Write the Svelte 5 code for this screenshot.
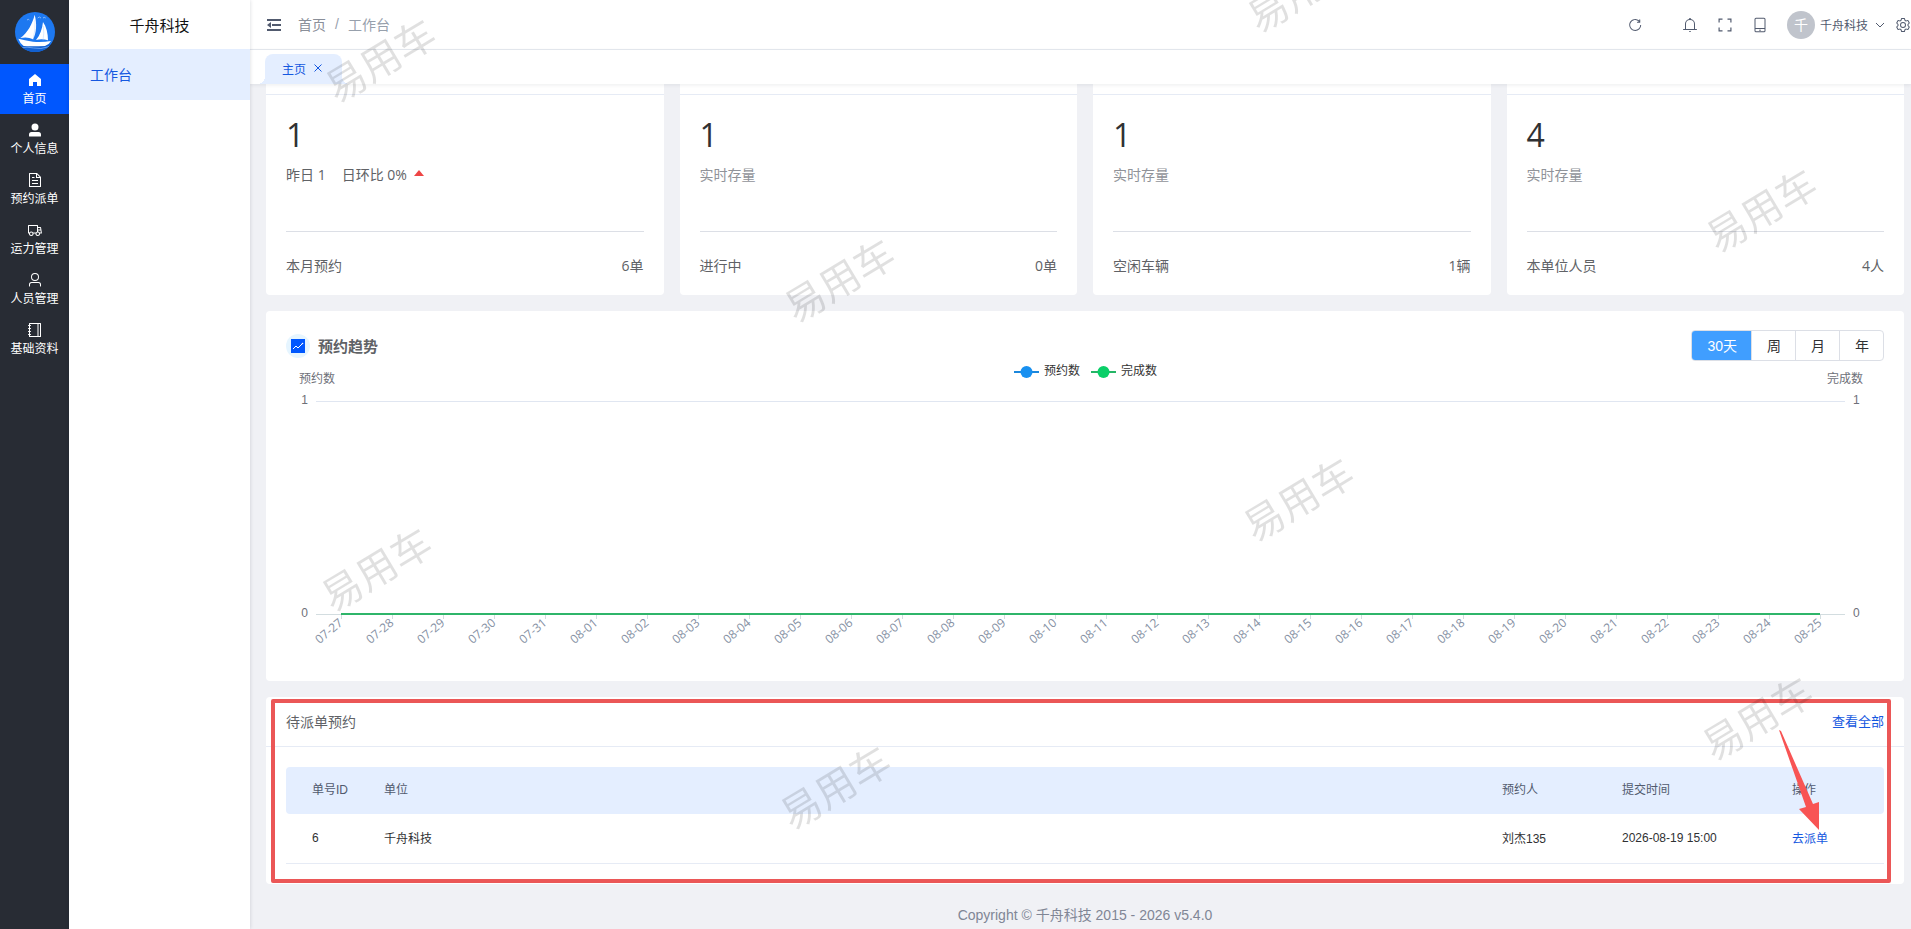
<script>
    const fills = {
        home: 'M512 128 128 447.936V896h255.936V640H640v256h255.936V447.936z',
        userFilled: 'M288 320a224 224 0 1 0 448 0 224 224 0 1 0-448 0zm544 608H160a32 32 0 0 1-32-32v-96a160 160 0 0 1 160-160h448a160 160 0 0 1 160 160v96a32 32 0 0 1-32 32z',
        document: 'M832 384H576V128H192v768h640V384zm-26.496-64L640 154.496V320h165.504zM160 64h480l256 256v608a32 32 0 0 1-32 32H160a32 32 0 0 1-32-32V96a32 32 0 0 1 32-32zm160 448h384v64H320v-64zm0-192h160v64H320v-64zm0 384h384v64H320v-64z',
        van: 'M128.896 736H96a32 32 0 0 1-32-32V224a32 32 0 0 1 32-32h576a32 32 0 0 1 32 32v96h164.544a32 32 0 0 1 31.616 27.136l54.144 352A32 32 0 0 1 922.688 736h-91.52a144 144 0 1 1-286.272 0H415.104a144 144 0 1 1-286.272 0zm23.36-64a143.872 143.872 0 0 1 239.488 0H568.32c17.088-25.6 42.24-45.376 71.744-55.808V256H128v416h24.256zm655.488 0h77.632l-19.648-128H704v64.896A144 144 0 0 1 807.744 672zm48.128-192-14.72-96H704v96h151.872zM688 832a80 80 0 1 0 0-160 80 80 0 0 0 0 160zm-416 0a80 80 0 1 0 0-160 80 80 0 0 0 0 160z',
        user: 'M512 512a192 192 0 1 0 0-384 192 192 0 0 0 0 384zm0 64a256 256 0 1 1 0-512 256 256 0 0 1 0 512zm320 320v-96a96 96 0 0 0-96-96H288a96 96 0 0 0-96 96v96a32 32 0 1 1-64 0v-96a160 160 0 0 1 160-160h448a160 160 0 0 1 160 160v96a32 32 0 1 1-64 0z',
        notebook: 'M192 128v768h640V128H192zm-32-64h704a32 32 0 0 1 32 32v832a32 32 0 0 1-32 32H160a32 32 0 0 1-32-32V96a32 32 0 0 1 32-32zM672 128h64v768h-64zM96 192h128q32 0 32 32t-32 32H96q-32 0-32-32t32-32zm0 192h128q32 0 32 32t-32 32H96q-32 0-32-32t32-32zm0 192h128q32 0 32 32t-32 32H96q-32 0-32-32t32-32zm0 192h128q32 0 32 32t-32 32H96q-32 0-32-32t32-32z',
        refresh: 'M784.512 230.272v-50.56a32 32 0 1 1 64 0v149.056a32 32 0 0 1-32 32H667.52a32 32 0 1 1 0-64h92.992A320 320 0 1 0 524.8 833.152a320 320 0 0 0 320-320h64a384 384 0 0 1-384 384 384 384 0 0 1-384-384 384 384 0 0 1 643.712-282.88z',
        bell: 'M512 64a64 64 0 0 1 64 64v64H448v-64a64 64 0 0 1 64-64zM256 768h512V448a256 256 0 1 0-512 0v320zm256-640a320 320 0 0 1 320 320v384H192V448a320 320 0 0 1 320-320zM96 768h832q32 0 32 32t-32 32H96q-32 0-32-32t32-32zm352 128h128a64 64 0 0 1-128 0z',
        full: 'M96 96h256v76H172v180H96V96zM672 96h256v256h-76V172H672zM96 672h76v180h180v76H96zM852 672h76v256H672v-76h180z',
        tablet: 'M224 768v112a32 32 0 0 0 32 32h512a32 32 0 0 0 32-32V768H224zm0-64h576V144a32 32 0 0 0-32-32H256a32 32 0 0 0-32 32v560zm32-656h512a96 96 0 0 1 96 96v736a96 96 0 0 1-96 96H256a96 96 0 0 1-96-96V144a96 96 0 0 1 96-96zm256 840a48 48 0 1 1 0-96 48 48 0 0 1 0 96z',
        setting: 'M600.704 64a32 32 0 0 1 30.464 22.208l35.2 109.376c14.784 7.232 28.928 15.36 42.432 24.512l112.384-24.192a32 32 0 0 1 34.432 15.36L944.32 364.8a32 32 0 0 1-4.032 37.504l-77.12 85.12a357.12 357.12 0 0 1 0 49.024l77.12 85.248a32 32 0 0 1 4.032 37.504l-88.704 153.6a32 32 0 0 1-34.432 15.296L708.8 803.904c-13.44 9.088-27.648 17.28-42.368 24.512l-35.264 109.376A32 32 0 0 1 600.704 960H423.296a32 32 0 0 1-30.464-22.208L357.696 828.48a351.616 351.616 0 0 1-42.56-24.64l-112.32 24.256a32 32 0 0 1-34.432-15.36L79.68 659.2a32 32 0 0 1 4.032-37.504l77.12-85.248a357.12 357.12 0 0 1 0-48.896l-77.12-85.248A32 32 0 0 1 79.68 364.8l88.704-153.6a32 32 0 0 1 34.432-15.296l112.32 24.256c13.568-9.152 27.776-17.408 42.56-24.64l35.2-109.312A32 32 0 0 1 423.232 64H600.64zm-23.424 64H446.72l-36.352 113.088-24.512 11.968a294.113 294.113 0 0 0-34.816 20.096l-22.656 15.36-116.224-25.088-65.28 113.152 79.68 88.192-1.92 27.136a293.12 293.12 0 0 0 0 40.192l1.92 27.136-79.808 88.192 65.344 113.152 116.224-25.024 22.656 15.296a294.113 294.113 0 0 0 34.816 20.096l24.512 11.968L446.72 896h130.688l36.48-113.152 24.448-11.904a288.282 288.282 0 0 0 34.752-20.096l22.592-15.296 116.288 25.024 65.28-113.152-79.744-88.192 1.92-27.136a293.12 293.12 0 0 0 0-40.256l-1.92-27.136 79.808-88.128-65.344-113.152-116.288 24.96-22.592-15.232a287.616 287.616 0 0 0-34.752-20.096l-24.448-11.904L577.344 128zM512 320a192 192 0 1 1 0 384 192 192 0 0 1 0-384zm0 64a128 128 0 1 0 0 256 128 128 0 0 0 0-256z'
    };

    const menu = [
        { icon: 'home', label: '首页' },
        { icon: 'userFilled', label: '个人信息' },
        { icon: 'document', label: '预约派单' },
        { icon: 'van', label: '运力管理' },
        { icon: 'user', label: '人员管理' },
        { icon: 'notebook', label: '基础资料' }
    ];

    const cards = [
        { value: 1, compare: true, label: '本月预约', total: '6单' },
        { value: 1, label: '进行中', total: '0单' },
        { value: 1, label: '空闲车辆', total: '1辆' },
        { value: 4, label: '本单位人员', total: '4人' }
    ];

    const ranges = ['30天', '周', '月', '年'];
    let range = $state('30天');

    // 30 days from 07-27
    const days = Array.from({ length: 30 }, (_, i) => {
        const d = new Date(2026, 6, 27 + i);
        return String(d.getMonth() + 1).padStart(2, '0') + '-' + String(d.getDate()).padStart(2, '0');
    });

    const left = 30;
    const top = 40;
    const bottom = 253;
    let width = $state(1598);
    let right = $derived(width - 39);
    let step = $derived((right - left) / days.length);
    let middle = $derived(Math.round(width / 2));

    const tickX = (i) => Math.round(left + step * (i + 0.5));

    const rows = [
        { id: 6, unit: '千舟科技', person: '刘杰135', time: '2026-08-19 15:00' }
    ];

    const marks = [
        [381, 61], [1303, -9], [1762, 211], [840, 281],
        [1299, 500], [377, 570], [1758, 719], [836, 788]
    ];
</script>

{#snippet icon(name)}
    <svg class="icon" viewBox="0 0 1024 1024" aria-hidden="true"><path d={fills[name]} /></svg>
{/snippet}

<div class="layout">
    <nav class="side">
        <svg class="logo" viewBox="0 0 120 120" aria-hidden="true">
            <defs>
                <clipPath id="round"><circle cx="60" cy="60" r="60" /></clipPath>
            </defs>
            <g clip-path="url(#round)">
                <rect width="120" height="120" fill="#1d78f0" />
                <path d="M0 97q30 8 60 3t60-5v25H0z" fill="#1260d0" />
                <path d="M59 8C52 36 38 62 16 78q22-5 38 4C65 62 66 34 59 8z" fill="#fff" />
                <path d="M84 30C82 50 75 70 63 84q18-5 36 1C99 64 94 44 84 30z" fill="#fff" />
                <path d="M10 80q18 4 44 9 28 2 54-2-6 11-18 15-40 2-64 0Q15 94 10 80z" fill="#fff" />
                <path d="M60 24q2 30-6 60M85 42q3 22-1 44" stroke="#8fc0ff" stroke-width="1" fill="none" />
                <path d="M16 108q20-5 40 0t46-4" stroke="#8fc0ff" stroke-width="2" fill="none" />
                <path d="M68 18l5-3 5 3M84 18l4-2 4 2M36 24l4-2 3 2" stroke="#bfdcff" stroke-width="2" fill="none" />
            </g>
        </svg>
        {#each menu as item, i}
            <a class="side-item" class:active={i === 0} href="#{item.icon}">
                {@render icon(item.icon)}
                <span>{item.label}</span>
            </a>
        {/each}
    </nav>

    <aside class="submenu">
        <h1>千舟科技</h1>
        <a href="#workbench">工作台</a>
    </aside>

    <div class="page">
        <header class="header">
            <button class="tool" type="button" aria-label="折叠菜单">
                <svg class="fold" viewBox="0 0 14 14" aria-hidden="true">
                    <path d="M0 1h14v2H0zM5 6h9v2H5zM0 11h14v2H0zM4 4v6L0 7z" />
                </svg>
            </button>
            <div class="crumbs">
                <a href="#home">首页</a><span>/</span><span>工作台</span>
            </div>
            <div class="tools">
                <button class="tool refresh" type="button" aria-label="刷新">{@render icon('refresh')}</button>
                <button class="tool" type="button" aria-label="消息">{@render icon('bell')}</button>
                <button class="tool" type="button" aria-label="全屏">{@render icon('full')}</button>
                <button class="tool" type="button" aria-label="手机版">{@render icon('tablet')}</button>
                <button class="account" type="button">
                    <span class="avatar">千</span>
                    <span>千舟科技</span>
                    <svg class="chevron" viewBox="0 0 10 10" aria-hidden="true"><path d="M1 3l4 4 4-4" /></svg>
                </button>
                <button class="tool setting" type="button" aria-label="设置">{@render icon('setting')}</button>
            </div>
        </header>

        <div class="tabs">
            <div class="tab">
                <a href="#home">主页</a>
                <button type="button" aria-label="关闭">
                    <svg viewBox="0 0 8 8" aria-hidden="true"><path d="M0.5 0.5l7 7M7.5 0.5l-7 7" /></svg>
                </button>
            </div>
        </div>

        <main class="content">
            <section class="cards">
                {#each cards as card}
                    <div class="card">
                        <div class="card-top"></div>
                        <div class="card-body">
                            <div class="value">{card.value}</div>
                            {#if card.compare}
                                <div class="sub compare">
                                    <span>昨日 1</span><span>日环比 0%</span><i class="up"></i>
                                </div>
                            {:else}
                                <div class="sub">实时存量</div>
                            {/if}
                            <div class="total"><span>{card.label}</span><span>{card.total}</span></div>
                        </div>
                    </div>
                {/each}
            </section>

            <section class="panel trend">
                <div class="trend-head">
                    <span class="badge">
                        <svg viewBox="0 0 14 14" aria-hidden="true">
                            <rect width="14" height="14" fill="#0057fe" />
                            <path d="M2 10l3-3 2 2 4-4" fill="none" stroke="#fff" />
                            <circle cx="11.5" cy="4.5" r="0.8" fill="#fff" />
                        </svg>
                    </span>
                    <h2>预约趋势</h2>
                    <div class="ranges">
                        {#each ranges as name}
                            <button type="button" class:on={range === name} onclick={() => (range = name)}>{name}</button>
                        {/each}
                    </div>
                </div>
                <div class="chart" bind:clientWidth={width}>
                    <svg width="100%" height="300" role="img" aria-label="预约趋势">
                        <line class="grid" x1={left} x2={right} y1={top + 0.5} y2={top + 0.5} />
                        <line class="axis" x1={left} x2={right} y1={bottom + 0.5} y2={bottom + 0.5} />
                        <text class="name" x={left + 1} y="22" text-anchor="middle">预约数</text>
                        <text class="name" x={right} y="22" text-anchor="middle">完成数</text>
                        <text class="name" x={left - 8} y="43" text-anchor="end">1</text>
                        <text class="name" x={left - 8} y="256" text-anchor="end">0</text>
                        <text class="name" x={right + 8} y="43">1</text>
                        <text class="name" x={right + 8} y="256">0</text>
                        {#each days as day, i}
                            <line class="axis" x1={tickX(i) + 0.5} x2={tickX(i) + 0.5} y1={bottom} y2={bottom + 5} />
                            <text class="day" text-anchor="end" transform="translate({tickX(i)} {bottom + 7}) rotate(-40)" y="4">{day}</text>
                        {/each}
                        <line class="series" x1={tickX(0)} x2={tickX(29)} y1={bottom} y2={bottom} />
                        <g transform="translate({middle - 71} 11)">
                            <path d="M0 0h25" stroke="#1b87dc" stroke-width="2" />
                            <circle cx="12.5" cy="0" r="6" fill="#1890f0" />
                            <text class="legend" x="30" y="3">预约数</text>
                            <path d="M77 0h25" stroke="#25b566" stroke-width="2" />
                            <circle cx="89.5" cy="0" r="6" fill="#0acf68" />
                            <text class="legend" x="107" y="3">完成数</text>
                        </g>
                    </svg>
                </div>
            </section>

            <section class="panel orders">
                <div class="orders-head">
                    <h3>待派单预约</h3>
                    <a href="#all">查看全部</a>
                </div>
                <div class="orders-body">
                    <table>
                        <thead>
                            <tr>
                                <th class="c-id">单号ID</th>
                                <th>单位</th>
                                <th class="c-person">预约人</th>
                                <th class="c-time">提交时间</th>
                                <th class="c-action">操作</th>
                            </tr>
                        </thead>
                        <tbody>
                            {#each rows as row}
                                <tr>
                                    <td class="c-id">{row.id}</td>
                                    <td>{row.unit}</td>
                                    <td>{row.person}</td>
                                    <td>{row.time}</td>
                                    <td><a href="#dispatch">去派单</a></td>
                                </tr>
                            {/each}
                        </tbody>
                    </table>
                </div>
                <div class="frame"></div>
                <svg class="arrow" viewBox="0 0 42 102" aria-hidden="true">
                    <path d="M0 0L2 1 34 74 40 72V100L20 79 27 77z" />
                </svg>
            </section>

            <footer>Copyright © 千舟科技 2015 - 2026 v5.4.0</footer>
        </main>
    </div>
</div>

<div class="marks" aria-hidden="true">
    {#each marks as [x, y]}
        <span style="left: {x}px; top: {y}px">易用车</span>
    {/each}
</div>

<style>
    :global(body) {
        margin: 0;
        background: #f0f1f5;
        overflow: hidden;
        font-family: "Liberation Sans", "Noto Sans CJK SC", sans-serif;
        font-size: 14px;
        color: #606266;
    }

    a {
        color: #1558e0;
        text-decoration: none;
    }

    button {
        padding: 0;
        border: 0;
        background: none;
        font: inherit;
        color: inherit;
        cursor: pointer;
    }

    h1, h2, h3 {
        margin: 0;
        font-weight: 400;
    }

    .layout {
        display: flex;
        height: 100vh;
    }

    .icon {
        display: block;
        width: 16px;
        height: 16px;
        fill: currentColor;
    }

    .side {
        flex: none;
        width: 69px;
        background: #282c34;
    }

    .logo {
        display: block;
        width: 40px;
        height: 40px;
        margin: 12px auto;
    }

    .side-item {
        display: flex;
        flex-direction: column;
        align-items: center;
        gap: 2px;
        box-sizing: border-box;
        height: 50px;
        padding-top: 8px;
        font-size: 12px;
        line-height: 18px;
        color: #fff;
    }

    .side-item.active {
        background: #0057fe;
    }

    .submenu {
        position: relative;
        z-index: 2;
        flex: none;
        width: 181px;
        background: #fff;
        box-shadow: 0 0 4px rgba(0, 21, 41, 0.16);
    }

    .submenu h1 {
        height: 49px;
        font-size: 15px;
        line-height: 52px;
        text-align: center;
        color: #111;
    }

    .submenu a {
        display: block;
        height: 51px;
        padding-left: 21px;
        line-height: 52px;
        background: #e4eeff;
    }

    .page {
        flex: 1;
        min-width: 0;
        display: flex;
        flex-direction: column;
    }

    .header {
        flex: none;
        display: flex;
        align-items: center;
        height: 49px;
        padding-left: 17px;
        background: #fff;
        border-bottom: 1px solid #e6eaf0;
    }

    .tool {
        color: #515a6e;
    }

    .fold {
        display: block;
        width: 14px;
        height: 14px;
        fill: currentColor;
    }

    .crumbs {
        display: flex;
        align-items: center;
        gap: 9px;
        margin-left: 17px;
        padding-bottom: 2px;
        color: #97a0ac;
    }

    .crumbs a {
        color: #8a8f99;
    }

    .tools {
        display: flex;
        align-items: center;
        gap: 19px;
        margin-left: auto;
    }

    .refresh {
        margin-right: 20px;
    }

    .account {
        display: flex;
        align-items: center;
        gap: 5px;
        font-size: 12px;
        color: #515a6e;
    }

    .avatar {
        width: 28px;
        height: 28px;
        border-radius: 50%;
        background: #c0c4cc;
        font-size: 14px;
        line-height: 28px;
        color: #fff;
    }

    .chevron {
        width: 10px;
        height: 10px;
        margin-left: 2px;
        fill: none;
        stroke: currentColor;
    }

    .setting {
        margin-left: -9px;
    }

    .tabs {
        position: relative;
        z-index: 1;
        flex: none;
        display: flex;
        align-items: flex-end;
        height: 34px;
        padding-left: 15px;
        background: #fff;
        box-shadow: 0 1px 4px rgba(0, 21, 41, 0.08);
    }

    .tab {
        position: relative;
        display: flex;
        align-items: center;
        gap: 8px;
        box-sizing: border-box;
        height: 30px;
        padding: 0 20px 2px 17px;
        border-radius: 8px 8px 0 0;
        background: #e4eeff;
        font-size: 12px;
    }

    /* flared feet of the active tab */
    .tab::before,
    .tab::after {
        content: "";
        position: absolute;
        bottom: 0;
        width: 8px;
        height: 8px;
    }

    .tab::before {
        right: 100%;
        background: radial-gradient(circle at 0 0, transparent 8px, #e4eeff 8px);
    }

    .tab::after {
        left: 100%;
        background: radial-gradient(circle at 100% 0, transparent 8px, #e4eeff 8px);
    }

    .tab svg {
        display: block;
        width: 8px;
        height: 8px;
        fill: none;
        stroke: #1558e0;
    }

    .content {
        flex: 1;
        padding: 0 7px 0 16px;
    }

    .cards {
        display: grid;
        grid-template-columns: repeat(4, 1fr);
        gap: 16px;
        margin-bottom: 16px;
        font-family: "Open Sans", "Noto Sans CJK SC", sans-serif;
    }

    .card {
        background: #fff;
        border-radius: 0 0 4px 4px;
    }

    .card-top {
        height: 10px;
        border-bottom: 1px solid #e6ebf5;
    }

    .card-body {
        padding: 20px 20px 19px;
    }

    .value {
        font-size: 32px;
        line-height: 40px;
        color: #303133;
    }

    .sub {
        display: flex;
        align-items: center;
        height: 36px;
        margin-bottom: 40px;
        padding-top: 1px;
        box-sizing: border-box;
        color: #909399;
    }

    .compare {
        gap: 16px;
        color: #606266;
    }

    .up {
        margin: -2px 0 0 -9px;
        border: 5px solid transparent;
        border-top: 0;
        border-bottom: 6px solid #ee4545;
    }

    .total {
        display: flex;
        justify-content: space-between;
        padding-top: 24px;
        border-top: 1px solid #dcdfe6;
        line-height: 20px;
    }

    .panel {
        margin-bottom: 16px;
        border-radius: 4px;
        background: #fff;
    }

    .trend {
        padding: 19px 20px 20px;
    }

    .trend-head {
        display: flex;
        align-items: center;
    }

    .badge {
        display: grid;
        place-items: center;
        width: 24px;
        height: 24px;
        border-radius: 50%;
        background: #e6f5ff;
    }

    .badge svg {
        width: 14px;
        height: 14px;
    }

    .trend-head h2 {
        margin-left: 8px;
        font-size: 15px;
        font-weight: 700;
    }

    .ranges {
        display: flex;
        margin-left: auto;
        border: 1px solid #dcdfe6;
        border-radius: 4px;
        overflow: hidden;
    }

    .ranges button {
        height: 29px;
        padding: 0 14px 2px 15px;
        border-right: 1px solid #dcdfe6;
        color: #303133;
    }

    .ranges button:last-child {
        border-right: 0;
    }

    .ranges button.on {
        background: #409eff;
        color: #fff;
    }

    .chart svg {
        display: block;
        font-size: 12px;
    }

    .grid {
        stroke: #e0e6f1;
    }

    .axis {
        stroke: #d3dde0;
    }

    .series {
        stroke: #2fb56a;
        stroke-width: 2;
    }

    .name {
        fill: #6e7079;
    }

    .day {
        fill: #8590a3;
        font-family: "Open Sans", sans-serif;
    }

    .legend {
        fill: #333;
    }

    .orders {
        position: relative;
    }

    .orders-head {
        display: flex;
        align-items: center;
        justify-content: space-between;
        box-sizing: border-box;
        height: 50px;
        padding: 0 20px 2px;
        border-bottom: 1px solid #e6ebf5;
    }

    .orders-head h3 {
        font-size: 14px;
    }

    .orders-head a {
        font-size: 13px;
    }

    .orders-body {
        padding: 20px;
    }

    table {
        width: 100%;
        table-layout: fixed;
        border-spacing: 0;
        font-size: 12px;
        color: #303133;
    }

    th, td {
        box-sizing: border-box;
        padding: 0 10px 2px;
        text-align: left;
    }

    th {
        height: 47px;
        padding-bottom: 4px;
        background: #e4eeff;
        font-weight: 400;
        color: #515a6e;
    }

    th:first-child {
        border-radius: 4px 0 0 4px;
    }

    th:last-child {
        border-radius: 0 4px 4px 0;
    }

    td {
        height: 50px;
        border-bottom: 1px solid #e6ebf5;
    }

    .c-id {
        width: 88px;
        padding-left: 26px;
        padding-right: 0;
    }

    .c-person {
        width: 120px;
    }

    .c-time {
        width: 170px;
    }

    .c-action {
        width: 102px;
    }

    .frame {
        position: absolute;
        inset: 2px 13px 1px 5px;
        border: 4px solid #eb5757;
        border-radius: 2px;
        pointer-events: none;
    }

    .arrow {
        position: absolute;
        top: 33px;
        right: 83px;
        width: 42px;
        height: 102px;
        fill: #f85454;
    }

    footer {
        padding: 4px 0;
        line-height: 22px;
        text-align: center;
        color: #808695;
    }

    .marks {
        position: fixed;
        inset: 0;
        z-index: 3;
        overflow: hidden;
        pointer-events: none;
    }

    .marks span {
        position: absolute;
        transform: translate(-50%, -50%) rotate(-31deg);
        font-size: 40px;
        line-height: 40px;
        white-space: nowrap;
        color: rgba(0, 0, 0, 0.12);
    }
</style>
